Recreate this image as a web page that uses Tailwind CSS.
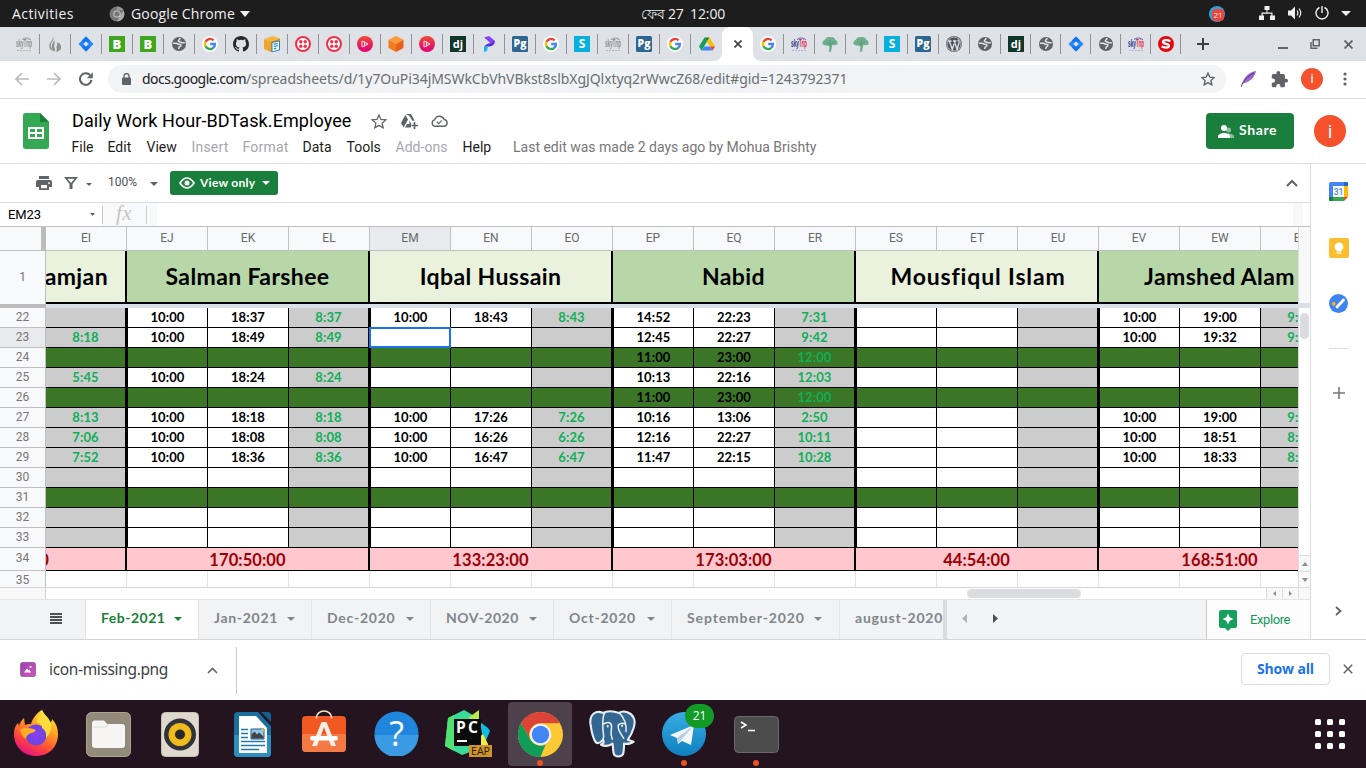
<!DOCTYPE html>
<html lang="en">
<head>
<meta charset="utf-8">
<title>Daily Work Hour-BDTask.Employee</title>
<script src="https://cdn.jsdelivr.net/npm/@tailwindcss/browser@4"></script>
</head>
<body class="w-[1366px] h-[768px] overflow-hidden bg-white font-['Roboto','Liberation_Sans',sans-serif] flex flex-col">

<!-- shared gradient, kept out of the hidden svg so that it stays paintable -->
<svg class="absolute w-0 h-0"><linearGradient id="pk" x2="0" y2="1"><stop stop-color="#f04a35"/><stop offset="1" stop-color="#e0007a"/></linearGradient></svg>
<!-- shared icons -->
<svg class="hidden">
  <symbol id="caret" viewBox="0 0 10 6"><path d="M0 0h10L5 6z"/></symbol>
  <symbol id="jira" viewBox="0 0 16 16"><path d="M8 .5 15.5 8 8 15.5.5 8z" fill="#2684ff"/><path d="M8 .5 4 4.5 8 8.500l4-4zM8 15.500l4-4-4-4-4 4z" fill="#0f74f0"/><path d="M8 5.300 10.700 8 8 10.700 5.300 8z" fill="#dee1e6"/></symbol>
  <symbol id="b" viewBox="0 0 16 16"><path d="M0 0h16v16H0z" fill="#3fa71f"/><text x="8" y="12.600" text-anchor="middle" font-family="Open Sans" font-weight="800" font-size="13" fill="#fff">B</text></symbol>
  <symbol id="globe" viewBox="0 0 16 16"><circle cx="8" cy="8" r="7" fill="#5f6368"/><path d="M2 7.300h3.500c1 0 1.200 1 2 1h1.300c1.500 0 1.500 2 .2 2.300-1 .2-1.300 1-1.300 2.400M13.800 6.800h-2.500c-1 0-1-.8-2-.8-2 0-2.500-1.500-1.300-2.200C9 3.300 9 3 9 2" fill="none" stroke="#dee1e6" stroke-width="1.500"/></symbol>
  <symbol id="g" viewBox="0 0 16 16"><circle cx="8" cy="8" r="8" fill="#fff"/><g fill="none" stroke-width="2.400"><path d="M11.600 4.400A5 5 0 0 0 3.500 5.800" stroke="#ea4335"/><path d="M3.500 5.700a5 5 0 0 0 0 4.600" stroke="#fbbc05"/><path d="M3.500 10.200A5 5 0 0 0 11.300 11.800" stroke="#34a853"/><path d="M11.200 11.900A5 5 0 0 0 12.900 8H8.200" stroke="#4285f4"/></g></symbol>
  <symbol id="gh" viewBox="0 0 16 16"><path fill="#24292e" fill-rule="evenodd" d="M8 0C3.580 0 0 3.580 0 8c0 3.540 2.290 6.530 5.470 7.590.4.070.55-.17.55-.38 0-.19-.01-.82-.01-1.490-2.010.37-2.530-.49-2.690-.94-.09-.23-.48-.94-.82-1.130-.28-.15-.68-.52-.01-.53.63-.01 1.080.58 1.230.82.72 1.210 1.870.87 2.330.66.07-.52.28-.87.51-1.070-1.780-.2-3.640-.89-3.640-3.950 0-.87.31-1.590.82-2.150-.08-.2-.36-1.020.08-2.120 0 0 .67-.21 2.200.82a7.600 7.600 0 0 1 4 0c1.530-1.040 2.200-.82 2.200-.82.44 1.100.16 1.920.08 2.120.51.56.82 1.270.82 2.150 0 3.070-1.870 3.750-3.650 3.950.29.25.54.73.54 1.480 0 1.070-.01 1.930-.01 2.200 0 .21.15.46.55.38A8 8 0 0 0 16 8c0-4.420-3.580-8-8-8z"/></symbol>
  <symbol id="box" viewBox="0 0 16 16"><path d="M0 3 9 0l7 2.500-9 3z" fill="#f6b73c"/><path d="M0 3l7 2.500V16l-7-3z" fill="#f2a32c"/><path d="M7 5.500 16 2.500v4H8V16H7z" fill="#e08f1c"/><path d="M8 6.500l7.500-1.500v9L8 15.800z" fill="#fff" stroke="#1f86c9"/><path d="M9.800 8.300l4-.8M9.800 10.500l4-.8M9.800 12.700l2.500-.5" stroke="#1f86c9" stroke-width="1.200"/></symbol>
  <symbol id="twilio" viewBox="0 0 16 16"><circle cx="8" cy="8" r="7" fill="#fff" stroke="#f22f46" stroke-width="2"/><g fill="#f22f46"><circle cx="5.800" cy="5.800" r="1.700"/><circle cx="10.200" cy="5.800" r="1.700"/><circle cx="5.800" cy="10.200" r="1.700"/><circle cx="10.200" cy="10.200" r="1.700"/></g></symbol>
  <symbol id="pink" viewBox="0 0 16 16"><circle cx="8" cy="8" r="8" fill="url(#pk)"/><path d="M5 5v6l6-3zM7.500 5.500v5" fill="none" stroke="#fff" stroke-opacity=".85" stroke-width="1"/></symbol>
  <symbol id="cube" viewBox="0 0 16 16"><path d="M8 0l7.500 3.800L8 8 .5 3.800z" fill="#ff9a3c"/><path d="M.5 3.800 8 8v8L.5 12z" fill="#f47c20"/><path d="M15.500 3.800 8 8v8l7.500-4z" fill="#e8601c"/></symbol>
  <symbol id="dj" viewBox="0 0 16 16"><path d="M0 0h16v16H0z" fill="#103529"/><text x="8" y="11.500" text-anchor="middle" font-family="Open Sans" font-weight="700" font-size="11" fill="#fff">dj</text></symbol>
  <symbol id="pp" viewBox="0 0 16 16"><path d="M3 1.500 8 0l6 5-3 3.500-5-4.500z" fill="#8a3ff0"/><path d="M13.500 4.500c1 4-2 5.500-5.500 6l-5 1c1-3 4-4.500 8-4.500z" fill="#5a2be0"/><path d="M3 10.500 7 9.800 6 15l-3 1z" fill="#19b3f5"/></symbol>
  <symbol id="pg" viewBox="0 0 16 16"><rect width="16" height="16" rx="1.500" fill="#2d6691"/><text x="8" y="11.400" text-anchor="middle" font-family="Open Sans" font-weight="800" font-size="10.500" fill="#fff">Pg</text></symbol>
  <symbol id="s" viewBox="0 0 16 16"><path d="M0 0h16v16H0z" fill="#06b0dd"/><text x="8" y="12.200" text-anchor="middle" font-family="Open Sans" font-weight="700" font-size="12" fill="#fff">S</text></symbol>
  <symbol id="drive" viewBox="0 0 16 16"><path d="M5.500 1.500 0 10.500l2.500 4L8 5.500z" fill="#0f9d58"/><path d="M5.500 1.500h5L8 5.500z" fill="#188038"/><path d="M10.500 1.500 16 10.500h-5L8 5.500z" fill="#fbbc04"/><path d="M5 10.500h6l2.500 4h-11z" fill="#4285f4"/><path d="M11 10.500h5l-2.500 4z" fill="#ea4335"/></symbol>
  <symbol id="skyg" viewBox="0 0 16 16"><path d="M6 3.500Q11 0 15 4" fill="none" stroke="#9a9a9a"/><text x="0" y="11" font-family="Liberation Sans" font-weight="700" font-size="10" textLength="16" lengthAdjust="spacingAndGlyphs" fill="#8c8c8c">skyTrip</text><path d="M1 14.500h14" stroke="#b5b5b5" stroke-dasharray="2 1"/></symbol>
  <symbol id="sky" viewBox="0 0 16 16"><path d="M6 3.500Q11 0 15 4" fill="none" stroke="#5668b8"/><text x="0" y="11" font-family="Liberation Sans" font-weight="700" font-size="10" textLength="8" lengthAdjust="spacingAndGlyphs" fill="#27348b">sky</text><text x="8" y="11" font-family="Liberation Sans" font-weight="700" font-size="10" textLength="8" lengthAdjust="spacingAndGlyphs" fill="#e5243b">Trip</text><path d="M1 14.500h14" stroke="#a9b3d6" stroke-dasharray="2 1"/></symbol>
  <symbol id="flame" viewBox="0 0 16 16"><path d="M6 .5c2 3-1.500 5-2 8-.4 3 1 5 3 6.500C3 14.500 2 12 2.200 9.500 2.500 6 6.500 4 6 .5z" fill="#999"/><path d="M7 4c2 3-1 5 .5 8 .5 1 1 2.500 0 3.500C5 14 4.500 11.500 5 9c.5-2 2-3 2-5z" fill="#8a8a8a"/><path d="M10 6c4 1.500 5 5 3.500 7.500-1 1.500-3 2.300-5 2 1.500-1 1.500-2 1-3.500s1.500-3.500.5-6z" fill="#8f8f8f"/></symbol>
  <symbol id="tree" viewBox="0 0 16 16"><path d="M.5 8C0 5 2 4.500 3 3.500 4 1 7 .5 8.500 1.200 11 .8 12.500 2 13 3.500c2 .5 3 2.500 2.500 4.500-1.500 1.500-4 1.500-5 .5l-1.500 7L7 16l.3-6C5 9.500 2 10 .5 8z" fill="#6fae8c"/><path d="M8 9.500V4M8 9 4.500 5.500M8 9l4-3" stroke="#4f9672" stroke-width=".8"/></symbol>
  <symbol id="wp" viewBox="0 0 16 16"><circle cx="8" cy="8" r="8" fill="#50575e"/><circle cx="8" cy="8" r="7" fill="none" stroke="#dee1e6" stroke-width=".7"/><path d="M2 5h3.500M7 5h3.500M3.300 5l3 8.500L8 8M8.300 5l2.800 8.500 2-7c.3-1-.5-2-1.100-2.800" fill="none" stroke="#dee1e6" stroke-width="1.300"/></symbol>
  <symbol id="rs" viewBox="0 0 16 16"><circle cx="8" cy="8" r="8" fill="#e50914"/><path d="M12.300 5.300C10 3.600 5 3.800 5 6s6 1.500 6 3.800-5 2.200-7.300.6" fill="none" stroke="#fff" stroke-width="2.300"/></symbol>
  <symbol id="chrome" viewBox="0 0 44 44"><circle cx="22" cy="22" r="22" fill="#fbc934"/><path d="M22 0A22 22 0 0 1 41.050 11H22a11 11 0 0 0-9.530 16.500L2.950 11A22 22 0 0 1 22 0z" fill="#db4437"/><path d="M2.950 11l9.520 16.500A11 11 0 0 0 27 31.800L22 44A22 22 0 0 1 2.950 11z" fill="#0f9d58"/><circle cx="22" cy="22" r="10.500" fill="#f1f1f1"/><circle cx="22" cy="22" r="8.500" fill="#4285f4"/></symbol>
</svg>

<!-- desktop top bar -->
<header class="h-[27px] shrink-0 bg-[#1d1d1d] text-[#f0f0f0] flex items-center text-[14px] font-['Open_Sans',sans-serif] leading-[27px]">
  <span class="ml-3 w-[97px] tracking-[.43px]">Activities</span>
  <svg class="w-4 h-4" viewBox="0 0 16 16"><circle cx="8" cy="8" r="7.500" fill="#777"/><path d="M8 .5A7.500 7.500 0 0 1 14.500 4H8z" fill="#999"/><path d="M14.500 4.300a7.500 7.500 0 0 1-6.500 11l3.500-6z" fill="#aaa"/><circle cx="8" cy="8" r="3.600" fill="#ddd"/><circle cx="8" cy="8" r="2.800" fill="#777"/></svg>
  <span class="ml-[6px] w-[109px] tracking-[.15px]">Google Chrome</span>
  <svg class="w-[10px] h-[6px] fill-[#f0f0f0]"><use href="#caret"/></svg>
  <span class="ml-[391px] w-[49px] tracking-[-.2px] whitespace-nowrap">ফেব 27</span>
  <span class="tracking-[-.1px] w-[519px]">12:00</span>
  <span class="relative w-[16px] h-[16px] rounded-full bg-[#2f9fd8] flex"><span class="absolute left-[3px] top-[3px] w-[12px] h-[12px] rounded bg-[#f0443b] text-[8px] leading-[12px] text-center">21</span></span>
  <svg class="ml-[34px] w-[16px] h-[14px] -mt-[2px] fill-[#f0f0f0]" viewBox="0 0 16 14"><path d="M5.500 0h5v4h-2v2.500h5V9.500H16V14h-5V9.500h1.300V7.700H3.700v1.800H5V14H0V9.500h2.500v-3h5V4h-2z"/></svg>
  <svg class="ml-[13px] w-[15px] h-[14px] -mt-[1px]" viewBox="0 0 15 14"><path d="M0 4.500h3L7 .5v13L3 9.500H0z" fill="#f0f0f0"/><path d="M9 4.500q1.800 2.500 0 5M11 2.500q3.500 4.500 0 9" fill="none" stroke="#f0f0f0" stroke-width="1.200"/></svg>
  <svg class="ml-[12px] w-[14px] h-[14px] -mt-[2px]" viewBox="0 0 14 14"><path d="M4.500 1.500A6 6 0 1 0 9.500 1.500M7 0v7" fill="none" stroke="#f0f0f0" stroke-width="1.400"/></svg>
  <svg class="ml-[12px] w-[10px] h-[5px] fill-[#f0f0f0]" viewBox="0 0 10 5"><path d="M0 0h10L5 5z"/></svg>
</header>

<!-- browser tab strip -->
<div class="h-[34px] shrink-0 bg-[#dee1e6] flex pl-[8px]">
  <div id="tabsA" class="flex items-center"></div>
  <div class="relative w-[31px] h-full bg-white rounded-t-lg flex items-center justify-center">
    <svg class="absolute bottom-0 -left-2 w-2 h-2" viewBox="0 0 8 8"><path d="M8 0v8H0a8 8 0 0 0 8-8z" fill="#fff"/></svg>
    <svg class="absolute bottom-0 -right-2 w-2 h-2" viewBox="0 0 8 8"><path d="M0 0v8h8a8 8 0 0 1-8-8z" fill="#fff"/></svg>
    <svg class="w-[8px] h-[8px]" viewBox="0 0 8 8"><path d="M.5.500l7 7M7.500.5l-7 7" stroke="#3c4043" stroke-width="1.600"/></svg>
  </div>
  <div id="tabsB" class="flex items-center"></div>
  <div class="flex items-center">
    <svg class="ml-[16px] w-[12px] h-[12px]" viewBox="0 0 12 12"><path d="M6 0v12M0 6h12" stroke="#3c4043" stroke-width="2"/></svg>
    <svg class="ml-[69px] mt-[8px] w-[10px] h-[2px]"><rect width="10" height="2" fill="#5f6368"/></svg>
    <svg class="ml-[22px] w-[10px] h-[10px]" viewBox="0 0 10 10"><path d="M3.200.8h6v6h-6zM1 3v6.200h6.500" fill="none" stroke="#5f6368" stroke-width="1.500"/></svg>
    <svg class="ml-[24px] w-[9px] h-[9px]" viewBox="0 0 9 9"><path d="M.5.500l8 8M8.500.5l-8 8" stroke="#5f6368" stroke-width="1.800"/></svg>
  </div>
</div>

<!-- address bar -->
<div class="h-[38px] shrink-0 bg-white border-b border-[#dadce0] flex items-center pb-px">
  <svg class="ml-[15px] w-[14px] h-[14px]" viewBox="0 0 14 14"><path d="M14 7H1M7 1 1 7l6 6" fill="none" stroke="#bababa" stroke-width="1.700"/></svg>
  <svg class="ml-[18px] w-[14px] h-[14px]" viewBox="0 0 14 14"><path d="M0 7h13M7 1l6 6-6 6" fill="none" stroke="#bababa" stroke-width="1.700"/></svg>
  <svg class="ml-[18px] w-[14px] h-[14px]" viewBox="0 0 14 14"><path d="M12.500 8A5.800 5.800 0 1 1 11 3" fill="none" stroke="#5f6368" stroke-width="2"/><path d="M13.800.3v6H7.800z" fill="#5f6368"/></svg>
  <div class="ml-[15px] w-[1118px] h-[28px] rounded-full bg-[#f1f3f4] flex items-center">
    <svg class="ml-[14px] w-[9px] h-[12px]" viewBox="0 0 9 12"><path d="M2 5V3a2.500 2.500 0 0 1 5 0v2" fill="none" stroke="#5f6368" stroke-width="1.300"/><rect y="4.500" width="9" height="7.500" rx="1" fill="#5f6368"/></svg>
    <span class="ml-[11px] w-[104px] text-[14px] leading-5 tracking-[-.53px] text-[#202124] font-['Noto_Sans',sans-serif]">docs.google.com</span>
    <span class="w-[601px] text-[14px] leading-5 tracking-[-.06px] text-[#6b6f73] whitespace-nowrap font-['Noto_Sans',sans-serif]">/spreadsheets/d/1y7OuPi34jMSWkCbVhVBkst8slbXgJQlxtyq2rWwcZ68/edit#gid=1243792371</span>
    <svg class="ml-[354px] w-[14px] h-[14px]" viewBox="0 0 14 14"><path d="M7 1l1.800 4.100 4.500.4-3.400 3 1 4.400L7 10.600l-3.900 2.300 1-4.400-3.400-3 4.500-.4z" fill="none" stroke="#5f6368" stroke-width="1.300"/></svg>
  </div>
  <svg class="ml-[15px] w-[15px] h-[16px]" viewBox="0 0 15 16"><path d="M15 0C8 1 3 6 1 13l2.500-1C9 11 14 6 15 0z" fill="#9a6bc4"/><path d="M0 16C2 10 7 5 13 2" fill="none" stroke="#5b2a91" stroke-width="1"/></svg>
  <svg class="ml-[15px] w-[17px] h-[17px] fill-[#5f6368]" viewBox="1 1 22 22"><path d="M20.500 11H19V7a2 2 0 0 0-2-2h-4V3.500a2.500 2.500 0 0 0-5 0V5H4a2 2 0 0 0-2 2v3.800h1.500a2.700 2.700 0 0 1 0 5.400H2V20c0 1.100.9 2 2 2h3.800v-1.500a2.700 2.700 0 0 1 5.400 0V22H17a2 2 0 0 0 2-2v-4h1.500a2.500 2.500 0 0 0 0-5z"/></svg>
  <span class="ml-[13px] w-[22px] h-[22px] rounded-full bg-[#f4512c] text-white text-[13px] leading-[22px] text-center">i</span>
  <svg class="ml-[20px] w-[4px] h-[14px] fill-[#5f6368]" viewBox="0 0 4 14"><circle cx="2" cy="2" r="1.600"/><circle cx="2" cy="7" r="1.600"/><circle cx="2" cy="12" r="1.600"/></svg>
</div>

<!-- document header -->
<div class="h-[65px] shrink-0 border-b border-[#dadce0] flex">
  <svg class="ml-[23px] mt-[14px] w-[26px] h-[36px] shrink-0" viewBox="0 0 26 36"><path d="M2.500 0H17l9 9v24.500a2.500 2.500 0 0 1-2.500 2.500h-21A2.500 2.500 0 0 1 0 33.500v-31A2.500 2.500 0 0 1 2.500 0z" fill="#34a853"/><path d="M17 0l9 9h-9z" fill="#188038"/><path d="M5 14h16v12H5zm2 2v3h5v-3zm7 0v3h5v-3zm-7 5v3h5v-3zm7 0v3h5v-3z" fill="#fff" fill-rule="evenodd"/></svg>
  <div class="ml-[23px] w-[1134px]">
    <div class="flex items-center h-[26px] mt-[9px]">
      <span class="w-[299px] text-[18px] leading-[26px] tracking-[.09px] text-black">Daily Work Hour-BDTask.Employee</span>
      <svg class="w-[16px] h-[15px]" viewBox="0 0 14 14"><path d="M7 1l1.800 4.100 4.500.4-3.400 3 1 4.400L7 10.600l-3.900 2.300 1-4.400-3.400-3 4.500-.4z" fill="none" stroke="#5f6368" stroke-width="1.200"/></svg>
      <svg class="ml-[14px] w-[17px] h-[15px]" viewBox="0 0 17 15"><path d="M5 0h5l3.500 6.500-2 .5L8.500 2z" fill="#5f6368"/><path d="M4.300 1 7 5.500l-4.500 8L0 9z" fill="#5f6368"/><path d="M8.200 6.500 10.500 10H10v3.500H4l2-3.500h2.500z" fill="#5f6368"/><path d="M13.500 8v7M10.500 11.500H17" stroke="#5f6368" stroke-width="1.700"/></svg>
      <svg class="ml-[13px] w-[17px] h-[12px]" viewBox="0 0 17 12"><path d="M4 11.200a3.200 3.200 0 0 1-.3-6.300 5 5 0 0 1 9.500-.4 3.400 3.400 0 0 1 .2 6.700z" fill="none" stroke="#5f6368" stroke-width="1.400"/><path d="M5.800 6.800l1.900 1.800 3.200-3.200" fill="none" stroke="#5f6368" stroke-width="1.200"/></svg>
    </div>
    <div class="flex text-[14px] leading-[20px] mt-[3px] -ml-[.5px] text-[#1c1d20] whitespace-nowrap">
      <span class="w-[36px]">File</span><span class="w-[39px]">Edit</span><span class="w-[45px]">View</span><span class="w-[51px] text-[#a5a8ab] tracking-[.2px]">Insert</span><span class="w-[60px] text-[#a5a8ab] tracking-[.2px]">Format</span><span class="w-[44px]">Data</span><span class="w-[49px]">Tools</span><span class="w-[67px] text-[#a5a8ab] tracking-[.04px]">Add-ons</span><span class="w-[50.500px]">Help</span><span class="text-[#777]">Last edit was made 2 days ago by Mohua Brishty</span>
    </div>
  </div>
  <div class="mt-[14px] w-[88px] h-[36px] rounded bg-[#1a7f3c] text-white flex items-center">
    <svg class="ml-[12px] w-[16px] h-[13px]" viewBox="0 0 16 13"><circle cx="10.500" cy="5" r="2.500" fill="#fff" opacity=".5"/><path d="M10 8.500c3 0 6 1 6 3V13h-6z" fill="#fff" opacity=".5"/><circle cx="6" cy="3" r="3" fill="#fff"/><path d="M0 11.500c0-2 3-3.500 6-3.500s6 1.500 6 3.500V13H0z" fill="#fff"/></svg>
    <span class="ml-[5px] -mt-[3px] text-[14px] font-bold tracking-[.6px] font-['Lato',sans-serif]">Share</span>
  </div>
  <span class="ml-[20px] mt-[16px] w-[32px] h-[32px] rounded-full bg-[#f4512c] text-white text-[19px] leading-[33px] text-center">i</span>
</div>

<!-- editor and side panel -->
<div class="h-[475px] shrink-0 flex">
<main class="w-[1310px] flex flex-col">
  <!-- toolbar -->
  <div class="h-[39px] shrink-0 border-b border-[#dadce0] flex items-center">
    <svg class="ml-[36px] w-[16px] h-[14px]" viewBox="0 0 16 14"><path d="M3 0h10v3H3z" fill="#5f6368"/><path d="M2 4h12a2 2 0 0 1 2 2v5h-3v3H3v-3H0V6a2 2 0 0 1 2-2zm3 5v3.200h6V9zm8-2.800a.9.900 0 1 0 .02 0z" fill="#5f6368" fill-rule="evenodd"/></svg>
    <svg class="ml-[12px] w-[14px] h-[12px]" viewBox="0 0 14 12"><path d="M0 0h14L8.500 7v5h-3V7zm3.500 1.700L7 6l3.500-4.300z" fill="#5f6368" fill-rule="evenodd"/></svg>
    <svg class="ml-[8px] mt-[2px] w-[6px] h-[3px] fill-[#5f6368]" viewBox="0 0 10 5"><path d="M0 0h10L5 5z"/></svg>
    <span class="ml-[16px] w-[42px] -mt-[2px] text-[12px] text-[#4d5156]">100%</span>
    <svg class="mt-[1px] w-[8px] h-[4px] fill-[#5f6368]" viewBox="0 0 10 5"><path d="M0 0h10L5 5z"/></svg>
    <div class="ml-[12px] w-[108px] h-[24px] rounded-[3px] bg-[#1a7f3c] text-white flex items-center">
      <svg class="ml-[9px] w-[16px] h-[12px]" viewBox="0 0 16 12"><path d="M1 6q7-10 14 0-7 10-14 0z" fill="none" stroke="#fff" stroke-width="1.700"/><circle cx="8" cy="6" r="2.500" fill="#fff"/></svg>
      <span class="ml-[5px] w-[62px] -mt-px text-[12px] font-bold tracking-[.25px] font-['Lato',sans-serif]">View only</span>
      <svg class="w-[8px] h-[4px] fill-white" viewBox="0 0 10 5"><path d="M0 0h10L5 5z"/></svg>
    </div>
    <svg class="ml-[1008px] w-[12px] h-[8px]" viewBox="0 0 12 8"><path d="M1 7l5-5 5 5" fill="none" stroke="#5f6368" stroke-width="2"/></svg>
  </div>
  <!-- formula bar -->
  <div class="h-[24px] shrink-0 border-b border-[#c0c0c0] flex items-center">
    <span class="ml-[8px] w-[82px] text-[13px] tracking-[-.1px] text-black">EM23</span>
    <svg class="w-[5px] h-[3px] fill-[#5f6368] mr-[7px]" viewBox="0 0 10 6"><path d="M0 0h10L5 6z"/></svg>
    <div class="h-full w-[55px] bg-[#f8f9fa] flex items-center">
      <span class="h-[18px] w-px bg-[#c8c8c8]"></span>
      <span class="ml-[13px] w-[30px] -mt-[3px] text-[21px] leading-[22px] tracking-[.5px] italic text-[#c4c4c4] font-['Liberation_Serif',serif]">fx</span>
      <span class="h-[18px] w-px bg-[#d0d0d0]"></span>
    </div>
    <div class="ml-auto mr-[7px] w-[10px] h-full bg-[#f8f8f8]"></div>
  </div>
  <!-- sheet -->
  <div class="h-[361px] shrink-0 flex">
    <div id="sheet" class="relative w-[1298px] overflow-hidden flex flex-col"></div>
    <div class="w-[12px] border-l border-[#dadce0] bg-white flex flex-col items-center">
      <div class="h-[76px] w-full bg-[#f8f8f8]"></div>
      <div class="h-[5px] w-full bg-[#dcdfe8]"></div>
      <div class="mt-[5px] w-[9px] h-[26px] rounded-full bg-[#dadce0]"></div>
      <div class="mt-auto h-[16px] w-full border-t border-[#dadce0] bg-[#f8f8f8] flex items-center justify-center"><svg class="w-[6px] h-[4px] fill-[#8a8d91]" viewBox="0 0 6 4"><path d="M0 4h6L3 0z"/></svg></div>
      <div class="h-[17px] w-full border-y border-[#dadce0] bg-[#f8f8f8] flex items-center justify-center"><svg class="w-[6px] h-[4px] fill-[#8a8d91]" viewBox="0 0 6 4"><path d="M0 0h6L3 4z"/></svg></div>
    </div>
  </div>
  <!-- horizontal scrollbar -->
  <div class="h-[12px] shrink-0 border-b border-[#e3e5e8] flex items-center">
    <div class="w-[46px] h-full bg-[#f8f8f8] border-r border-[#d0d0d0]"></div>
    <div class="ml-[921px] w-[114px] h-[9px] rounded-full bg-[#dadce0]"></div>
    <div class="ml-[185px] w-[16px] h-full border-l border-[#dadce0] bg-[#f8f8f8] flex items-center justify-center"><svg class="w-[3px] h-[5px] fill-[#8a8d91]" viewBox="0 0 3 5"><path d="M3 0v5L0 2.500z"/></svg></div>
    <div class="w-[17px] h-full border-x border-[#dadce0] bg-[#f8f8f8] flex items-center justify-center"><svg class="w-[3px] h-[5px] fill-[#8a8d91]" viewBox="0 0 3 5"><path d="M0 0v5l3-2.500z"/></svg></div>
    <div class="flex-1 h-full bg-[#f8f8f8]"></div>
  </div>
  <!-- sheet tabs -->
  <div class="h-[39px] shrink-0 bg-[#f1f3f4] flex">
    <div class="w-[86px] shrink-0 flex items-center border-r border-[#e2e4e6]"><svg class="ml-[50px] -mt-[2px] w-[12px] h-[11px]" viewBox="0 0 12 11"><path d="M0 1h12M0 4h12M0 7h12M0 10h12" stroke="#4d5156" stroke-width="1.800"/></svg></div>
    <div id="sheets" class="w-[857px] shrink-0 overflow-hidden flex text-[14px] font-bold text-[#80868b] font-['Lato',sans-serif] whitespace-nowrap"></div>
    <div class="w-[4px] shrink-0 bg-[#d9dbdd]"></div>
    <svg class="ml-[15px] mt-[14px] w-[5px] h-[9px] fill-[#b0b3b7]" viewBox="0 0 5 9"><path d="M5 0v9L0 4.500z"/></svg>
    <svg class="ml-[26px] mt-[14px] w-[5px] h-[9px] fill-[#4d5156]" viewBox="0 0 5 9"><path d="M0 0v9l5-4.500z"/></svg>
    <div class="ml-auto w-[104px] bg-[#fcfcfc] border-l border-[#c8cacc] flex items-center">
      <svg class="ml-[12px] mt-[2px] w-[18px] h-[21px]" viewBox="0 0 18 21"><path d="M2 0h14a2 2 0 0 1 2 2v14a2 2 0 0 1-2 2h-4l-3 3-3-3H2a2 2 0 0 1-2-2V2a2 2 0 0 1 2-2z" fill="#16a05d"/><path d="M9 3.500l1.700 3.800L14.500 9l-3.800 1.700L9 14.500l-1.700-3.800L3.500 9l3.800-1.700z" fill="#fff"/></svg>
      <span class="ml-[13px] text-[13px] tracking-[-.4px] text-[#129a56]">Explore</span>
    </div>
  </div>
</main>
<!-- side panel -->
<aside class="w-[56px] border-l border-[#dadce0] flex flex-col items-center">
  <svg class="mt-[18px] w-[19px] h-[19px]" viewBox="0 0 19 19"><rect width="19" height="19" rx="1.500" fill="#4285f4"/><path d="M15 0h2.500A1.500 1.500 0 0 1 19 1.500V4h-4z" fill="#1967d2"/><path d="M15 4h4v11h-4z" fill="#fbbc04"/><path d="M0 15h15v4H1.500A1.500 1.500 0 0 1 0 17.500z" fill="#34a853"/><path d="M0 15h4v4H1.500A1.500 1.500 0 0 1 0 17.500z" fill="#188038"/><path d="M15 15h4v4h-4z" fill="#fff"/><path d="M15 15h4l-4 4z" fill="#ea4335"/><path d="M4 4h11v11H4z" fill="#fff"/><text x="9.500" y="12.600" text-anchor="middle" font-family="Roboto" font-weight="500" font-size="8.500" fill="#4285f4">31</text></svg>
  <svg class="mt-[37px] w-[20px] h-[20px]" viewBox="0 0 20 20"><rect width="20" height="20" rx="2" fill="#fdbd2e"/><path d="M10 4.500a4.300 4.300 0 0 0-2.400 7.900V13.500h4.800v-1.100A4.300 4.300 0 0 0 10 4.500z" fill="#fff"/><path d="M7.700 14.500h4.600v1.300H7.700z" fill="#fff"/></svg>
  <svg class="mt-[36px] w-[19px] h-[19px]" viewBox="0 0 19 19"><circle cx="9.500" cy="9.500" r="9.500" fill="#3f83f0"/><path d="M8 13l6.500-7" stroke="#fff" stroke-width="2.800" stroke-linecap="round"/><circle cx="4.700" cy="9.700" r="2" fill="#f9ab2d"/></svg>
  <div class="mt-[35px] w-[20px] h-px bg-[#dadce0]"></div>
  <svg class="mt-[38px] w-[12px] h-[12px]" viewBox="0 0 12 12"><path d="M6 0v12M0 6h12" stroke="#777" stroke-width="1.600"/></svg>
  <svg class="mt-[207px] w-[7px] h-[10px]" viewBox="0 0 7 10"><path d="M1 1l4.500 4L1 9" fill="none" stroke="#5f6368" stroke-width="1.800"/></svg>
</aside>
</div>

<!-- download shelf -->
<div class="h-[61px] shrink-0 border-t border-[#d3d5d8] bg-white flex items-center">
  <svg class="ml-[20px] -mt-[2px] w-[16px] h-[15px]" viewBox="0 0 16 15"><linearGradient id="im" x2="1" y2="1"><stop stop-color="#9a3fb0"/><stop offset="1" stop-color="#d957c4"/></linearGradient><rect x=".5" y=".5" width="15" height="14" rx="2" fill="url(#im)" stroke="#9a6a9c"/><path d="M4 10.500l3-4 1.500 2 1-1 1.500 3z" fill="#fff"/><path d="M9.500 4h2v2h-2z" fill="#fff" opacity=".8"/></svg>
  <span class="ml-[13px] w-[158px] text-[15.500px] tracking-[-.35px] text-[#3c4043] font-['Noto_Sans',sans-serif]">icon-missing.png</span>
  <svg class="w-[11px] h-[7px]" viewBox="0 0 11 7"><path d="M1 6l4.500-4.500L10 6" fill="none" stroke="#5f6368" stroke-width="1.600"/></svg>
  <div class="ml-[18px] w-px h-[47px] bg-[#c8cacd]"></div>
  <div class="ml-[1004px] -mt-[2px] w-[89px] h-[32px] rounded border border-[#dadce0] text-center text-[14px] leading-[30px] font-bold tracking-[-.15px] text-[#1a73e8] font-['Open_Sans',sans-serif]">Show all</div>
  <svg class="ml-[13px] -mt-[2px] w-[10px] h-[10px]" viewBox="0 0 10 10"><path d="M.8.800l8.400 8.400M9.200.8.8 9.200" stroke="#5f6368" stroke-width="1.500"/></svg>
</div>

<!-- dock -->
<footer class="h-[68px] shrink-0 bg-[#241420] flex items-center">
  <div class="w-[72px] flex justify-center"><svg class="w-[46px] h-[46px] -mt-[2px]" viewBox="0 0 46 46"><defs><linearGradient id="ff" x1=".8" y1="0" x2=".3" y2="1"><stop stop-color="#fff04a"/><stop offset=".4" stop-color="#ff9a1f"/><stop offset=".75" stop-color="#ff4040"/><stop offset="1" stop-color="#e0108a"/></linearGradient><radialGradient id="fp"><stop stop-color="#8a3ff0"/><stop offset="1" stop-color="#6a45e0"/></radialGradient></defs><path d="M29 0c2 5 8 8 8 13 1-1 2-2 2-4 4 4 6 9 6 15C45 37 36 46 23 46S1 36 1 24c0-5 1-8 4-11l1 3c1-4 3-6 5-8l1 7c2-1 4-1 6-1 1-4 5-11 11-14z" fill="url(#ff)"/><circle cx="23" cy="25" r="10.500" fill="url(#fp)"/><path d="M7 20c4-3 11-2 16 0-1 2-3 3-5 3-3 1-5 3-5 6-3-2-5-5-6-9z" fill="#ffae26"/><path d="M23 12c3-3 3-8 6-12 2 5 7 8 9 13 1 6-1 11-5 15 1-5-1-8-4-10 1-3-3-5-6-6z" fill="#ffdc3a"/></svg></div>
  <div class="w-[72px] flex justify-center"><svg class="w-[45px] h-[45px]" viewBox="0 0 45 45"><rect x=".5" y=".5" width="44" height="44" rx="5" fill="#928a7a" stroke="#aaa495"/><path d="M6 11.500A3 3 0 0 1 9 8.500h9l3 3.500h15a3 3 0 0 1 3 3V33a3 3 0 0 1-3 3H9a3 3 0 0 1-3-3z" fill="#f7f5f3"/><path d="M7 15h13l3-2.500" fill="none" stroke="#d8d4cc" stroke-width=".8"/></svg></div>
  <div class="w-[72px] flex justify-center"><svg class="w-[38px] h-[45px]" viewBox="0 0 38 45"><rect x=".5" y=".5" width="37" height="44" rx="4" fill="#dfdacd" stroke="#c5c0b2"/><circle cx="19" cy="22.500" r="16" fill="#30333a"/><circle cx="19" cy="22.500" r="11.500" fill="#f0bc1c"/><circle cx="19" cy="22.500" r="5" fill="#26282c"/></svg></div>
  <div class="w-[72px] flex justify-center"><svg class="w-[37px] h-[45px]" viewBox="0 0 37 45"><path d="M4 0h20l13 14v27a4 4 0 0 1-4 4H4a4 4 0 0 1-4-4V4a4 4 0 0 1 4-4z" fill="#1a6f9f"/><path d="M0 23h37v18a4 4 0 0 1-4 4H4a4 4 0 0 1-4-4z" fill="#2c8fc0"/><path d="M27 0h7a3 3 0 0 1 3 3v7z" fill="#14618f"/><path d="M5 4h17l11 12v25H5z" fill="#fff"/><path d="M7 17.500h7M7 21.500h7M7 25.500h7M7 29.500h24M7 33.500h24M7 37.500h18" stroke="#1f7bb0" stroke-width="1.700"/><path d="M17 17h13v10H17z" fill="#8fc8ee" stroke="#1a5a85"/><path d="M17.500 26.500v-4l3-3 2.500 3 2-2 4.500 4v2z" fill="#444"/><path d="M27 17h3v3z" fill="#f5b70b"/></svg></div>
  <div class="w-[72px] flex justify-center"><svg class="w-[46px] h-[46px] -mt-[4px]" viewBox="0 0 46 46"><rect x="1" y="7" width="44" height="36" rx="4" fill="#f05a22"/><path d="M1 25h44v14a4 4 0 0 1-4 4H5a4 4 0 0 1-4-4z" fill="#f47a45"/><path d="M15.500 9.500V8a7.500 6 0 0 1 15 0v1.500" fill="none" stroke="#fbe3c2" stroke-width="1.600"/><path d="M20.500 13h5l9.500 24h-5L23 18l-7 19h-5z" fill="#fbeee6"/><rect x="9" y="27" width="28" height="4.500" rx="2.200" fill="#fff"/></svg></div>
  <div class="w-[72px] flex justify-center"><svg class="w-[45px] h-[45px] -mt-px" viewBox="0 0 45 45"><circle cx="22.500" cy="22.500" r="22" fill="#2086dd"/><path d="M.5 24h44a22 22 0 0 1-44 0z" fill="#3b9ae4"/><text x="22.500" y="34.500" text-anchor="middle" font-family="Open Sans" font-size="34" fill="#fff">?</text></svg></div>
  <div class="w-[72px] flex justify-center"><svg class="w-[47px] h-[48px]" viewBox="0 0 47 48"><path d="M3 8 19 0l14 8-8 34-8 3L0 36z" fill="#3bd99a"/><path d="M3 8 9 5v36l-9-5z" fill="#52e070"/><path d="M23 8 34 0v12z" fill="#b8ec4c"/><path d="M35 12l8 6 2 3-6 14z" fill="#10bce0"/><path d="M24 36l14-12 5 10v6H26z" fill="#f2ee48"/><path d="M9 9h27v27H9z" fill="#0a0a0a"/><text x="11" y="23" font-family="Open Sans" font-weight="700" font-size="15.500" textLength="22" fill="#fff">PC</text><path d="M12 30h10v2H12z" fill="#fff"/><path d="M24 35h23v12H24z" fill="#cf932f"/><text x="26" y="45" font-family="Open Sans" font-size="11" textLength="19" lengthAdjust="spacingAndGlyphs" fill="#2a1d08">EAP</text></svg></div>
  <div class="relative w-[72px] h-[68px] flex justify-center items-center"><div class="w-[64px] h-[64px] rounded bg-[#4d414b] flex items-center justify-center"><svg class="w-[45px] h-[45px]"><use href="#chrome"/></svg></div><span class="absolute bottom-[2px] w-[6px] h-[6px] rounded-full bg-[#ea5420]"></span></div>
  <div class="w-[72px] flex justify-center"><svg class="w-[47px] h-[48px]" viewBox="0 0 48 50"><path d="M14 3C7 0 0 4 1 14c1 8 3 17 6 20 3 2 5-1 7-3 2 3 0 4-2 5 3 2 8 2 12-1 1 4 0 9 2 12 2 2 7 2 9-1 1-3 1-8 1-11 5 1 9-1 10-2l-6-2c5-7 9-18 6-23C43 2 35 0 31 3 25 1 20 0 14 3z" fill="#336791" stroke="#e8eef3" stroke-width="2.200" stroke-linejoin="round"/><path d="M16 3c-3 4-2 12-2 17 0 3 2 7 0 11M14 15c4-3 9-3 9 2s-2 7 1 14M31 3c6 5 8 14 7 20M38 15c-4-2-7-1-8 1-1 5 3 9 6 14" fill="none" stroke="#e8eef3" stroke-width="1.600"/><circle cx="19" cy="17" r="1.100" fill="#fff"/><circle cx="34" cy="16.500" r="1.100" fill="#fff"/></svg></div>
  <div class="relative w-[72px] h-[68px] flex justify-center items-center"><svg class="w-[44px] h-[44px]" viewBox="0 0 44 44"><defs><linearGradient id="tg" x2="0" y2="1"><stop stop-color="#37aee2"/><stop offset="1" stop-color="#0f7fc0"/></linearGradient></defs><circle cx="22" cy="22" r="22" fill="url(#tg)"/><path d="M8 23 32 13l-3 20-9-4-4 3-1-6z" fill="#f1f6fa"/><path d="M15 26 32 13 19 28l-3 4z" fill="#b8cfe0"/></svg><span class="absolute left-[37px] top-[4px] w-[29px] h-[24px] rounded-full bg-[#129a26] text-white text-[12px] leading-[24px] text-center font-['Open_Sans',sans-serif]">21</span><span class="absolute bottom-[2px] w-[6px] h-[6px] rounded-full bg-[#ea5420]"></span></div>
  <div class="relative w-[72px] h-[68px] flex justify-center items-center"><svg class="w-[45px] h-[37px]" viewBox="0 0 45 37"><rect x=".5" y=".5" width="44" height="36" rx="4" fill="#4c4c4c" stroke="#6a6a6a"/><path d="M7 6l5 3-5 3" fill="none" stroke="#fff" stroke-width="1.500"/><path d="M14 14.500h7" stroke="#fff" stroke-width="1.500"/></svg><span class="absolute bottom-[2px] w-[6px] h-[6px] rounded-full bg-[#ea5420]"></span></div>
  <svg class="ml-[522px] w-[32px] h-[32px] fill-white" viewBox="0 0 32 32"><rect x="1" y="1" width="6" height="6" rx="1.500"/><rect x="13" y="1" width="6" height="6" rx="1.500"/><rect x="25" y="1" width="6" height="6" rx="1.500"/><rect x="1" y="13" width="6" height="6" rx="1.500"/><rect x="13" y="13" width="6" height="6" rx="1.500"/><rect x="25" y="13" width="6" height="6" rx="1.500"/><rect x="1" y="25" width="6" height="6" rx="1.500"/><rect x="13" y="25" width="6" height="6" rx="1.500"/><rect x="25" y="25" width="6" height="6" rx="1.500"/></svg>
</footer>

<script>
const $ = id => document.getElementById(id);

// browser tabs: icon names left and right of the active tab
const slot = (n, w, sep) => `<div class="${w} h-[20px] flex items-center justify-center ${sep ? 'border-r border-[#8f9298]' : ''}"><svg class="w-4 h-4"><use href="#${n}"/></svg></div>`;
const left = 'skyg flame jira b b globe g gh box twilio twilio pink cube pink dj pp pg g s skyg pg g drive'.split(' ');
const right = 'g sky tree tree s pg wp globe dj globe jira globe sky rs'.split(' ');
$('tabsA').innerHTML = left.map((n, i) => slot(n, i ? 'w-[31px]' : 'w-[32px]', i < 22)).join('');
$('tabsB').innerHTML = right.map((n, i) => slot(n, i < 8 ? 'w-[31px]' : 'w-[30px]', true)).join('');

// sheet tabs: [name, tab width, label width and tracking]
const sheets = [
  ['Feb-2021', 'w-[113px]', 'w-[74px] tracking-[.5px]'],
  ['Jan-2021', 'w-[113px]', 'w-[74px] tracking-[.7px]'],
  ['Dec-2020', 'w-[119px]', 'w-[80px] tracking-[.75px]'],
  ['NOV-2020', 'w-[123px]', 'w-[84px] tracking-[.5px]'],
  ['Oct-2020', 'w-[118px]', 'w-[79px] tracking-[.75px]'],
  ['September-2020', 'w-[168px]', 'w-[128px] tracking-[.88px]'],
  ['august-2020', 'w-[140px]', 'w-[101px] tracking-[.8px]']
];
$('sheets').innerHTML = sheets.map(([n, w, t], i) => `<div class="${w} shrink-0 flex items-center pl-[15px] border-r border-[#e2e4e6] ${i ? '' : 'bg-white text-[#188038]'}"><span class="${t} -mt-[4px]">${n}</span><svg class="-mt-px -ml-px w-[8px] h-[4px] fill-current" viewBox="0 0 10 5"><path d="M0 0h10L5 5z"/></svg></div>`).join('');

// grid
const cols = 'EI EJ EK EL EM EN EO EP EQ ER ES ET EU EV EW EX'.split(' ');
const names = ['Ramjan','Salman Farshee','Iqbal Hussain','Nabid','Mousfiqul Islam','Jamshed Alam'];
const totals = ['163:24:00','170:50:00','133:23:00','173:03:00','44:54:00','168:51:00'];
const E = ['','',''];
const rows = {
  22: [[''],['10:00','18:37','8:37'],['10:00','18:43','8:43'],['14:52','22:23','7:31'],E,['10:00','19:00','9:00']],
  23: [['8:18'],['10:00','18:49','8:49'],E,['12:45','22:27','9:42'],E,['10:00','19:32','9:32']],
  24: [[''],E,E,['11:00','23:00','12:00'],E,E],
  25: [['5:45'],['10:00','18:24','8:24'],E,['10:13','22:16','12:03'],E,E],
  26: [[''],E,E,['11:00','23:00','12:00'],E,E],
  27: [['8:13'],['10:00','18:18','8:18'],['10:00','17:26','7:26'],['10:16','13:06','2:50'],E,['10:00','19:00','9:00']],
  28: [['7:06'],['10:00','18:08','8:08'],['10:00','16:26','6:26'],['12:16','22:27','10:11'],E,['10:00','18:51','8:51']],
  29: [['7:52'],['10:00','18:36','8:36'],['10:00','16:47','6:47'],['11:47','22:15','10:28'],E,['10:00','18:33','8:33']],
  30: [[''],E,E,E,E,E], 31: [[''],E,E,E,E,E], 32: [[''],E,E,E,E,E], 33: [[''],E,E,E,E,E]
};
const green = [24, 26, 31];
const head = (n, extra) => `<div class="w-[46px] shrink-0 border-r border-b border-[#c0c0c0] text-[12px] text-[#777] leading-[19px] text-center ${extra}">${n}</div>`;
let h = `<div class="h-[24px] shrink-0 flex"><div class="w-[41px] shrink-0 bg-[#f8f9fa] border-b border-[#c0c0c0]"></div><div class="w-[5px] shrink-0 bg-[#bcbcbc]"></div>` +
  cols.map(c => `<div class="w-[81px] shrink-0 border-r border-b border-[#c0c0c0] text-[12px] leading-[23px] text-[#666a6e] text-center ${c === 'EM' ? 'bg-[#e8eaed]' : 'bg-[#f8f9fa]'}">${c}</div>`).join('') + '</div>';
h += `<div class="h-[53px] shrink-0 flex"><div class="w-[46px] shrink-0 border-r border-[#c0c0c0] bg-[#f8f9fa] text-[12px] leading-[52px] text-[#777] text-center">1</div><div class="flex-1 overflow-hidden flex border-b-2 border-black">` +
  names.map((n, i) => `<div class="${i ? 'w-[243px] justify-center' : 'w-[81px] justify-end pr-[17px]'} shrink-0 h-full overflow-hidden flex items-center border-r-2 border-black ${i % 2 ? 'bg-[#b7d7a8]' : 'bg-[#eaf1dd]'}"><span class="shrink-0 whitespace-nowrap text-[23px] font-bold ${i === 4 ? 'tracking-[.85px] pl-[3px]' : 'tracking-[.38px]'} font-['Lato',sans-serif]">${n}</span></div>`).join('') + '</div></div>';
h += `<div class="h-[4px] shrink-0 flex"><div class="w-[46px] bg-[#bcbcbc]"></div><div class="flex-1 bg-[#dae0ea]"></div></div>`;
for (const r in rows) {
  const g = green.includes(+r);
  h += `<div class="h-[20px] shrink-0 flex">` + head(r, r === '23' ? 'bg-[#e8eaed]' : 'bg-[#f8f9fa]');
  rows[r].forEach((grp, gi) => grp.forEach((v, k) => {
    const last = gi === 0 || k === 2;
    const bg = g ? 'bg-[#3a7625]' : last ? 'bg-[#cccccc]' : 'bg-white';
    const edge = last ? 'border-r-2' : k === 0 ? 'border-l border-r' : 'border-r';
    h += `<div class="w-[81px] shrink-0 border-b border-black ${edge} ${bg} ${last ? 'text-[#0fb057]' : 'text-black'} text-[13px] leading-[19px] tracking-[.1px] font-bold text-center font-['Lato',sans-serif]">${v}</div>`;
  }));
  h += '</div>';
}
h += `<div class="h-[23px] shrink-0 flex"><div class="w-[46px] shrink-0 border-r border-b border-[#c0c0c0] bg-[#f8f9fa] text-[12px] leading-[21px] text-[#777] text-center">34</div><div class="flex-1 overflow-hidden flex border-b border-black">` +
  totals.map((n, i) => `<div class="${i ? 'w-[243px] justify-center' : 'w-[81px] justify-end pr-[76px]'} shrink-0 h-full overflow-hidden flex items-center border-r-2 border-black bg-[#ffc7ce]"><span class="shrink-0 text-[16.500px] leading-[22px] tracking-[.1px] pt-[2px] font-bold text-[#9c0006] font-['Lato',sans-serif]">${n}</span></div>`).join('') + '</div></div>';
h += `<div class="h-[17px] shrink-0 flex border-b border-[#d5d7da]"><div class="w-[46px] shrink-0 border-r border-[#c0c0c0] bg-[#f8f9fa] text-[12px] leading-[19px] text-[#777] text-center">35</div>` + cols.map(() => `<div class="w-[81px] shrink-0 border-r border-[#e2e3e3]"></div>`).join('') + '</div>';
// selected cell
h += `<div class="absolute left-[369px] top-[100px] w-[82px] h-[21px] border-2 border-[#1a73e8]"></div>`;
$('sheet').innerHTML = h;
</script>
</body>
</html>
